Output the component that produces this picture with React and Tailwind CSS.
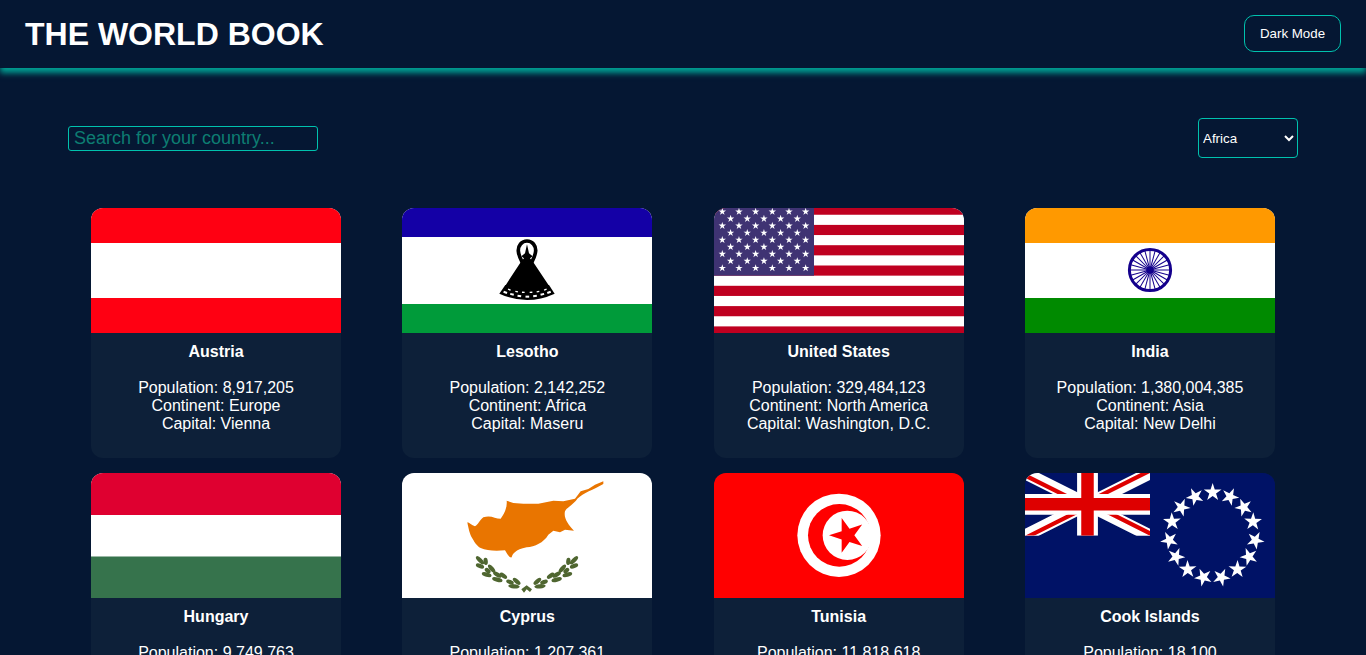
import React from "react";

const starPoints = (cx, cy, r, rot = -90) => {
  const pts = [];
  for (let i = 0; i < 10; i++) {
    const rad = i % 2 === 0 ? r : r * 0.382;
    const a = ((rot + i * 36) * Math.PI) / 180;
    pts.push(`${(cx + rad * Math.cos(a)).toFixed(2)},${(cy + rad * Math.sin(a)).toFixed(2)}`);
  }
  return pts.join(" ");
};

const FlagAustria = () => (
  <svg viewBox="0 0 250 125" className="block h-full w-full">
    <rect width="250" height="125" fill="#fff" />
    <rect width="250" height="35" fill="#ff0012" />
    <rect y="90" width="250" height="35" fill="#ff0012" />
  </svg>
);

const hatDots = [
  [46, 172, 20, 11, 6], [66, 178, 14, 11, 6], [88, 183, 8, 11, 6], [112, 185, 0, 11, 6],
  [135, 183, -8, 11, 6], [157, 178, -14, 11, 6], [177, 172, -20, 11, 6],
  [58, 164, 20, 8, 4], [80, 170, 12, 8, 4], [100, 172, 5, 8, 4],
  [123, 172, -5, 8, 4], [144, 170, -12, 8, 4], [166, 164, -20, 8, 4],
];

const FlagLesotho = () => (
  <svg viewBox="0 0 250 125" className="block h-full w-full">
    <rect width="250" height="125" fill="#fff" />
    <rect width="250" height="29" fill="#1400a6" />
    <rect y="96" width="250" height="29" fill="#009b3a" />
    <g transform="translate(88 27) scale(0.3333)">
      <path
        d="M97 82 C92 72 86 62 85 48 C84 32 95 18 111 18 C127 18 138 32 137 48 C136 62 130 72 125 82"
        fill="none"
        stroke="#000"
        strokeWidth="11"
      />
      <path d="M111 28 L117 55 L128 64 L120 70 L130 82 L177 152 L46 152 L92 82 L102 70 L94 64 L105 55 Z" fill="#000" />
      <path d="M46 150 L177 150 L194 176 Q111 214 28 176 Z" fill="#000" />
      {hatDots.map(([x, y, a, w, h]) => (
        <rect key={`${x}-${y}`} x={x - w / 2} y={y - h / 2} width={w} height={h} fill="#fff" transform={`rotate(${a} ${x} ${y})`} />
      ))}
    </g>
  </svg>
);

const FlagUS = () => {
  const reds = [-3.4, 16.9, 37.2, 57.5, 77.8, 98.1, 118.4];
  const stars = [];
  for (let row = 0; row < 9; row++) {
    const count = row % 2 === 0 ? 6 : 5;
    const start = row % 2 === 0 ? 8.3 : 16.6;
    for (let i = 0; i < count; i++) {
      stars.push([start + i * 16.67, 3.7 + row * 7.05]);
    }
  }
  return (
    <svg viewBox="0 0 250 125" className="block h-full w-full">
      <rect width="250" height="125" fill="#fff" />
      {reds.map((y) => (
        <rect key={y} y={y} width="250" height="10.15" fill="#bf0020" />
      ))}
      <rect width="100" height="67.7" fill="#3f3373" />
      {stars.map(([x, y]) => (
        <polygon key={`${x}-${y}`} points={starPoints(x, y, 3.9)} fill="#fff" />
      ))}
    </svg>
  );
};

const FlagIndia = () => (
  <svg viewBox="0 0 250 125" className="block h-full w-full">
    <rect width="250" height="125" fill="#fff" />
    <rect width="250" height="35" fill="#ff9900" />
    <rect y="90" width="250" height="35" fill="#008a00" />
    <circle cx="125" cy="62" r="20.6" fill="none" stroke="#14008c" strokeWidth="3" />
    <circle cx="125" cy="62" r="3.8" fill="#14008c" />
    {Array.from({ length: 24 }).map((_, i) => (
      <line key={i} x1="125" y1="62" x2="125" y2="42" stroke="#14008c" strokeWidth="1" transform={`rotate(${i * 15} 125 62)`} />
    ))}
  </svg>
);

const FlagHungary = () => (
  <svg viewBox="0 0 250 125" className="block h-full w-full">
    <rect width="250" height="125" fill="#fff" />
    <rect width="250" height="42" fill="#df0030" />
    <rect y="83.5" width="250" height="41.5" fill="#36734c" />
  </svg>
);

const leaves = [
  [60, 247, 45, 16], [77, 250, 85, 11], [60, 264, 20, 13], [95, 272, 50, 15], [83, 278, 40, 10],
  [80, 290, 15, 15], [112, 290, 30, 14], [130, 293, 35, 13], [112, 305, 15, 16],
  [170, 310, 40, 14], [150, 312, 20, 12], [162, 325, 5, 17],
];

const FlagCyprus = () => (
  <svg viewBox="-174 -15 750 375" className="block h-full w-full">
    <rect x="-174" y="-15" width="750" height="375" fill="#fff" />
    <path
      d="M430 10 L405 20 L385 33 L362 40 L345 62 L310 70 L280 68 L235 77 L190 77 L160 75 L140 68 C142 85 135 105 122 122 C105 122 92 110 70 118 C58 128 55 140 45 145 C35 142 28 134 22 133 C25 150 30 170 35 178 C42 190 50 205 62 210 C80 218 105 220 135 217 C140 225 147 240 155 238 C158 228 165 215 200 208 C225 205 250 195 265 170 L280 158 L300 163 L315 155 L342 158 C325 140 310 120 315 100 C320 88 340 80 352 62 C370 45 400 35 430 18 Z"
      fill="#e97500"
    />
    {leaves.map(([x, y, a, l]) => (
      <g key={`${x}-${y}`} fill="#4f6630">
        <ellipse cx={x} cy={y} rx={l} ry="6.5" transform={`rotate(${a} ${x} ${y})`} />
        <ellipse cx={402 - x} cy={y} rx={l} ry="6.5" transform={`rotate(${-a} ${402 - x} ${y})`} />
      </g>
    ))}
    <path d="M184 334 L200 322 L216 334 L210 342 L200 334 L192 344 Z" fill="#4f6630" />
  </svg>
);

const FlagTunisia = () => (
  <svg viewBox="12 9 750 375" className="block h-full w-full">
    <rect x="12" y="9" width="750" height="375" fill="#ff0000" />
    <circle cx="387" cy="196" r="125" fill="#fff" />
    <circle cx="388" cy="196" r="94" fill="#ff0000" />
    <circle cx="412" cy="196" r="74" fill="#fff" />
    <polygon points={starPoints(412, 196, 55, 180)} fill="#ff0000" />
  </svg>
);

const cookStars = [
  [578, 67], [630, 80], [671, 112], [699, 155], [706, 211], [687, 260], [652, 298], [604, 322],
  [550, 322], [503, 298], [468, 260], [448, 211], [456, 155], [484, 112], [525, 80],
];

const FlagCook = () => (
  <svg viewBox="15 9 750 375" className="block h-full w-full">
    <rect x="15" y="9" width="750" height="375" fill="#001266" />
    <svg x="15" y="9" width="375" height="188" viewBox="0 0 60 30" preserveAspectRatio="none">
      <clipPath id="jack">
        <path d="M30 15h30v15zv15h-30zh-30v-15zv-15h30z" />
      </clipPath>
      <path d="M0 0 L60 30 M60 0 L0 30" stroke="#fff" strokeWidth="6" />
      <path d="M0 0 L60 30 M60 0 L0 30" stroke="#de0000" strokeWidth="4" clipPath="url(#jack)" />
      <path d="M30 0 V30 M0 15 H60" stroke="#fff" strokeWidth="10" />
      <path d="M30 0 V30 M0 15 H60" stroke="#de0000" strokeWidth="6" />
    </svg>
    {cookStars.map(([x, y]) => (
      <polygon
        key={`${x}-${y}`}
        points={starPoints(x, y, 28, (Math.atan2(y - 190, x - 578) * 180) / Math.PI)}
        fill="#fff"
      />
    ))}
  </svg>
);

const countries = [
  { name: "Austria", population: "8,917,205", continent: "Europe", capital: "Vienna", Flag: FlagAustria },
  { name: "Lesotho", population: "2,142,252", continent: "Africa", capital: "Maseru", Flag: FlagLesotho },
  { name: "United States", population: "329,484,123", continent: "North America", capital: "Washington, D.C.", Flag: FlagUS },
  { name: "India", population: "1,380,004,385", continent: "Asia", capital: "New Delhi", Flag: FlagIndia },
  { name: "Hungary", population: "9,749,763", continent: "Europe", capital: "Budapest", Flag: FlagHungary },
  { name: "Cyprus", population: "1,207,361", continent: "Europe", capital: "Nicosia", Flag: FlagCyprus },
  { name: "Tunisia", population: "11,818,618", continent: "Africa", capital: "Tunis", Flag: FlagTunisia },
  { name: "Cook Islands", population: "18,100", continent: "Oceania", capital: "Avarua", Flag: FlagCook },
];

function CountryCard({ country }) {
  const { name, population, continent, capital, Flag } = country;
  return (
    <div className="h-[250px] w-[250px] overflow-hidden rounded-xl bg-[#0d2039] text-center text-white">
      <div className="h-[125px] w-full">
        <Flag />
      </div>
      <h3 className="mt-[10px] text-base font-bold leading-[18px]">{name}</h3>
      <p className="mt-[18px] text-base leading-[18px]">Population: {population}</p>
      <p className="text-base leading-[18px]">Continent: {continent}</p>
      <p className="text-base leading-[18px]">Capital: {capital}</p>
    </div>
  );
}

export default function App() {
  return (
    <div className="h-screen overflow-hidden bg-[#051733] font-['Liberation_Sans',Arial,sans-serif] text-white">
      <header className="flex h-[68px] items-center justify-between px-[25px] shadow-[0_5px_6px_#00a093]">
        <h1 className="text-[32px] font-bold leading-none">THE WORLD BOOK</h1>
        <button className="mb-px h-[37px] w-[97px] rounded-[10px] border border-[#00c2ae] text-[13.33px] text-white">
          Dark Mode
        </button>
      </header>
      <div className="flex items-center justify-between px-[68px] pt-[50px]">
        <input
          type="text"
          placeholder="Search for your country..."
          className="h-[25px] w-[250px] rounded-[3px] border border-[#00c2ae] bg-transparent pl-[5px] pr-1.5 text-lg text-white outline-none placeholder:text-[#0d7d72]"
        />
        <select className="h-10 w-[100px] rounded border border-[#00c2ae] bg-[#051733] text-[13.33px] text-white">
          <option>Africa</option>
          <option>America</option>
          <option>Asia</option>
          <option>Europe</option>
          <option>Oceania</option>
        </select>
      </div>
      <main className="flex flex-wrap justify-between gap-y-[15px] px-[91px] pt-[50px]">
        {countries.map((country) => (
          <CountryCard key={country.name} country={country} />
        ))}
      </main>
    </div>
  );
}
